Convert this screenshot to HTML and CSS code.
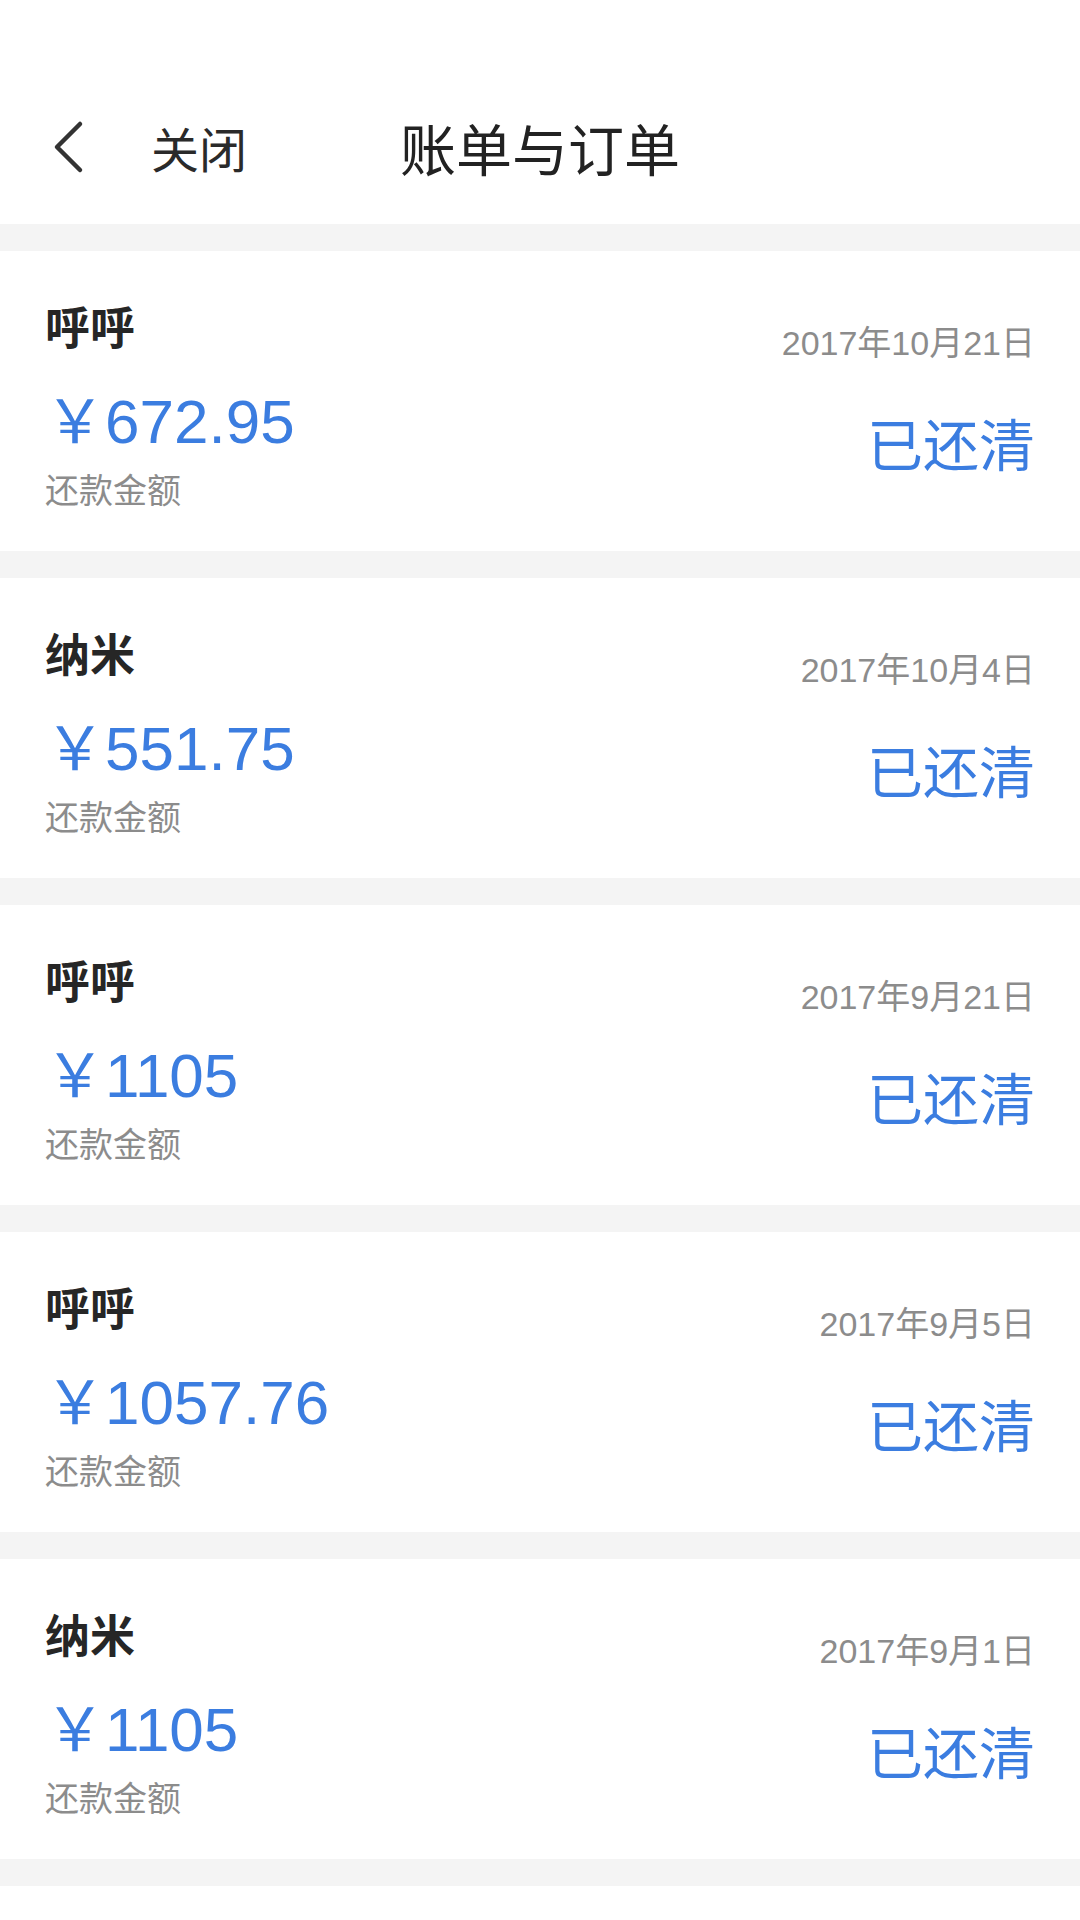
FILE: index.html
```html
<!DOCTYPE html>
<html lang="zh-CN">
<head>
<meta charset="utf-8">
<title>账单与订单</title>
<link rel="stylesheet" href="styles.css">
</head>
<body>
<div class="page">
  <header class="nav">
    <div class="nav-left">
      <svg class="back" width="34" height="54" viewBox="0 0 34 54" aria-hidden="true">
        <polyline points="29,4 6,27 29,50" fill="none" stroke="#333" stroke-width="4.5" stroke-linecap="round" stroke-linejoin="round"/>
      </svg>
      <span class="close">关闭</span>
    </div>
    <h1 class="title">账单与订单</h1>
    <div class="nav-right"></div>
  </header>

  <ul class="list">
    <li class="card">
      <div class="col-left">
        <div class="name">呼呼</div>
        <div class="amount"><span class="yen">￥</span>672.95</div>
        <div class="label">还款金额</div>
      </div>
      <div class="col-right">
        <div class="date">2017年10月21日</div>
        <div class="status">已还清</div>
      </div>
    </li>
    <li class="card">
      <div class="col-left">
        <div class="name">纳米</div>
        <div class="amount"><span class="yen">￥</span>551.75</div>
        <div class="label">还款金额</div>
      </div>
      <div class="col-right">
        <div class="date">2017年10月4日</div>
        <div class="status">已还清</div>
      </div>
    </li>
    <li class="card">
      <div class="col-left">
        <div class="name">呼呼</div>
        <div class="amount"><span class="yen">￥</span>1105</div>
        <div class="label">还款金额</div>
      </div>
      <div class="col-right">
        <div class="date">2017年9月21日</div>
        <div class="status">已还清</div>
      </div>
    </li>
    <li class="card">
      <div class="col-left">
        <div class="name">呼呼</div>
        <div class="amount"><span class="yen">￥</span>1057.76</div>
        <div class="label">还款金额</div>
      </div>
      <div class="col-right">
        <div class="date">2017年9月5日</div>
        <div class="status">已还清</div>
      </div>
    </li>
    <li class="card">
      <div class="col-left">
        <div class="name">纳米</div>
        <div class="amount"><span class="yen">￥</span>1105</div>
        <div class="label">还款金额</div>
      </div>
      <div class="col-right">
        <div class="date">2017年9月1日</div>
        <div class="status">已还清</div>
      </div>
    </li>
    <li class="card card-empty"></li>
  </ul>
</div>
</body>
</html>
```

FILE: styles.css
```css
* {
  box-sizing: border-box;
}

html, body {
  margin: 0;
  padding: 0;
  background: #f4f4f4;
}

body {
  width: 1080px;
  height: 1920px;
  overflow: hidden;
  font-family: "Noto Sans CJK SC", "Noto Sans", sans-serif;
  color: #222;
}

.page {
  display: flex;
  flex-direction: column;
  gap: 27px;
}

.nav {
  height: 224px;
  background: #fff;
  display: grid;
  grid-template-columns: 1fr auto 1fr;
  align-items: center;
  padding-top: 70px;
}

.nav-left {
  display: flex;
  align-items: center;
  gap: 66px;
  padding-left: 51px;
}

.back {
  display: block;
}

.close {
  font-size: 48px;
  line-height: 54px;
  color: #2a2a2a;
}

.title {
  margin: 0;
  font-size: 56px;
  font-weight: 400;
  line-height: 56px;
  color: #222;
}

.list {
  list-style: none;
  margin: 0;
  padding: 0;
  display: flex;
  flex-direction: column;
  gap: 27px;
}

.card {
  height: 300px;
  flex: none;
  background: #fff;
  padding: 0 45px;
  display: flex;
  justify-content: space-between;
}

.col-left {
  display: flex;
  flex-direction: column;
  padding-top: 52px;
}

.name {
  font-size: 45px;
  line-height: 45px;
  font-weight: 700;
  color: #262626;
}

.amount {
  margin-top: 37px;
  font-family: "Liberation Sans", "Noto Sans CJK SC", sans-serif;
  font-size: 62px;
  line-height: 64px;
  color: #3b7de0;
}

.yen {
  font-family: "Noto Sans CJK SC", sans-serif;
  font-size: 60px;
}

.label {
  margin-top: 18px;
  font-size: 34px;
  line-height: 34px;
  color: #8c8c8c;
}

.col-right {
  display: flex;
  flex-direction: column;
  align-items: flex-end;
  padding-top: 75px;
}

.date {
  font-family: "Liberation Sans", "Noto Sans CJK SC", sans-serif;
  font-size: 34px;
  line-height: 34px;
  color: #8c8c8c;
}

.status {
  margin-top: 54px;
  font-size: 56px;
  line-height: 56px;
  color: #3b7de0;
}
```
